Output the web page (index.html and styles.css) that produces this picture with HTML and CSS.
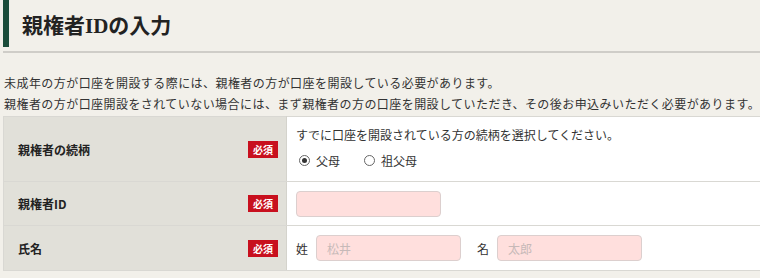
FILE: index.html
```html
<!DOCTYPE html>
<html lang="ja">
<head>
<meta charset="utf-8">
<link rel="stylesheet" href="styles.css">
</head>
<body>
<div class="page">
  <h1 class="page-title">親権者IDの入力</h1>
  <div class="rule"></div>
  <div class="intro">
    <p>未成年の方が口座を開設する際には、親権者の方が口座を開設している必要があります。</p>
    <p>親権者の方が口座開設をされていない場合には、まず親権者の方の口座を開設していただき、その後お申込みいただく必要があります。</p>
  </div>
  <table class="form">
    <tr class="row-1">
      <th><div class="th-in"><span class="label">親権者の続柄</span><span class="req">必須</span></div></th>
      <td>
        <div class="note">すでに口座を開設されている方の続柄を選択してください。</div>
        <div class="radios">
          <label class="opt"><span class="radio on"></span>父母</label>
          <label class="opt"><span class="radio"></span>祖父母</label>
        </div>
      </td>
    </tr>
    <tr class="row-2">
      <th><div class="th-in"><span class="label">親権者ID</span><span class="req">必須</span></div></th>
      <td><div class="field id-field"></div></td>
    </tr>
    <tr class="row-3">
      <th><div class="th-in"><span class="label">氏名</span><span class="req">必須</span></div></th>
      <td>
        <div class="names">
          <span class="nlabel">姓</span><div class="field name-field"><span class="ph">松井</span></div>
          <span class="nlabel second">名</span><div class="field name-field"><span class="ph">太郎</span></div>
        </div>
      </td>
    </tr>
  </table>
</div>
</body>
</html>
```

FILE: styles.css
```css
html, body {
  margin: 0;
  padding: 0;
  background: #f2f0ea;
  overflow: hidden;
}
body {
  font-family: "Noto Sans CJK JP", "Noto Sans", sans-serif;
  color: #333;
  font-size: 12px;
}
.page {
  padding-left: 3px;
  width: 790px;
}
.page-title {
  margin: 0;
  height: 47px;
  display: flex;
  align-items: center;
  border-left: 6px solid #1b4d3a;
  padding-left: 13px;
  font-family: "Liberation Serif", "Noto Sans CJK JP", serif;
  font-size: 21px;
  font-weight: bold;
  color: #222;
}
.rule {
  margin-top: 4px;
  height: 2px;
  background: #cfcdc8;
}
.intro {
  margin-top: 19px;
  margin-left: 1px;
}
.intro p {
  margin: 0;
  line-height: 21px;
  font-size: 12px;
  letter-spacing: 0.44px;
  color: #333;
  white-space: nowrap;
}
.form {
  margin-top: 2px;
  border-collapse: collapse;
  width: 790px;
}
.form th, .form td {
  border: 1px solid #d9d8d3;
  padding: 0;
}
.form th {
  width: 282px;
  background: #e1e0d9;
  text-align: left;
  border-right-color: #d4d3cc;
}
.form td {
  background: #fff;
  padding-left: 9px;
}
.th-in {
  display: flex;
  align-items: center;
  justify-content: space-between;
  padding: 0 8px 0 14px;
}
.label {
  font-weight: bold;
  font-size: 12px;
  color: #222;
}
.req {
  display: inline-flex;
  align-items: center;
  justify-content: center;
  width: 30px;
  height: 17px;
  background: #c8101e;
  color: #fff;
  font-size: 10px;
  font-weight: bold;
}
.row-1 { height: 65px; }
.row-2 { height: 44px; }
.row-3 { height: 45px; }
.note {
  line-height: 18px;
  margin-top: -4px;
}
.radios {
  display: flex;
  align-items: center;
  margin-top: 8px;
  padding-left: 3px;
}
.opt {
  display: inline-flex;
  align-items: center;
  margin-right: 24px;
}
.radio {
  width: 9px;
  height: 9px;
  border: 1px solid #666;
  border-radius: 50%;
  background: #fff;
  margin-right: 6px;
  position: relative;
}
.radio.on::after {
  content: "";
  position: absolute;
  left: 2px;
  top: 2px;
  width: 5px;
  height: 5px;
  border-radius: 50%;
  background: #333;
}
.field {
  box-sizing: border-box;
  height: 26px;
  background: #ffdfdd;
  border: 1px solid #dccfce;
  border-radius: 4px;
  display: flex;
  align-items: center;
}
.id-field {
  width: 145px;
}
.names {
  display: flex;
  align-items: center;
}
.nlabel {
  margin-right: 8px;
}
.nlabel.second {
  margin-left: 16px;
}
.name-field {
  width: 145px;
  padding-left: 10px;
}
.ph {
  color: #c6b9b8;
  font-size: 12px;
}
```
